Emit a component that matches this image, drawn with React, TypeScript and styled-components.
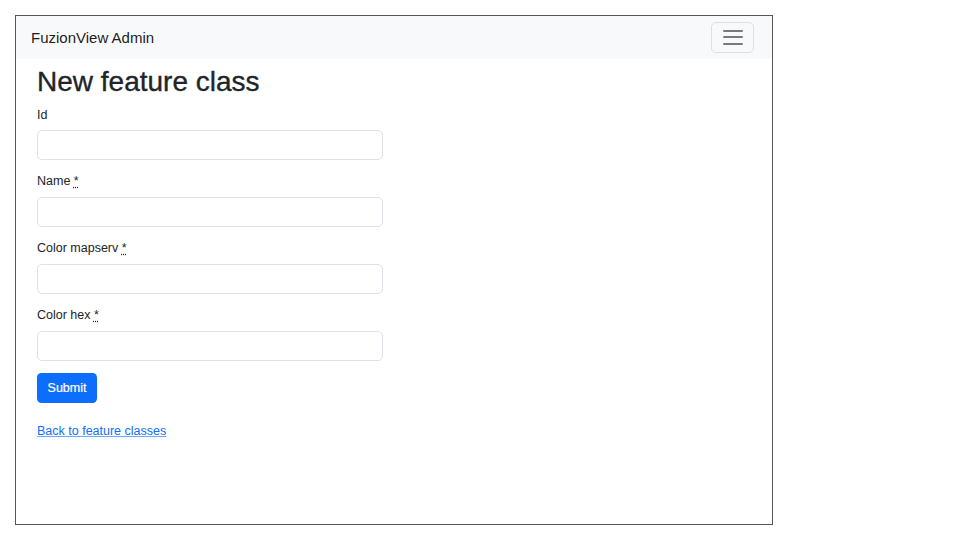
import { createGlobalStyle } from "styled-components";
import styled from "styled-components";

const GlobalStyle = createGlobalStyle`
  html, body {
    margin: 0;
    padding: 0;
    background: #fff;
  }
  body {
    font-family: "Liberation Sans", Arial, Helvetica, sans-serif;
    color: #212529;
    padding: 15px;
  }
  * { box-sizing: border-box; }
`;

const Frame = styled.div`
  width: 758px;
  height: 510px;
  border: 1px solid #555;
  background: #fff;
  overflow: hidden;
`;

const Navbar = styled.nav`
  height: 43px;
  background: #f8f9fa;
  display: flex;
  align-items: center;
  justify-content: space-between;
  padding: 0 18px 0 15px;
`;

const Brand = styled.a`
  font-size: 15px;
  color: rgba(0, 0, 0, 0.9);
  text-decoration: none;
`;

const Toggler = styled.button`
  width: 43px;
  height: 31px;
  margin-top: -1px;
  border: 1px solid rgba(0, 0, 0, 0.1);
  border-radius: 5px;
  background: transparent;
  display: flex;
  flex-direction: column;
  align-items: center;
  justify-content: center;
  gap: 4.5px;
  padding: 0;
`;

const TogglerBar = styled.span`
  display: block;
  width: 20px;
  height: 2px;
  border-radius: 1px;
  background: rgba(33, 37, 41, 0.6);
`;

const Main = styled.main`
  padding: 6px 21px 0;
`;

const Title = styled.h1`
  font-size: 28px;
  font-weight: 500;
  line-height: 1.2;
  margin: 0 0 7px;
  -webkit-text-stroke: 0.35px #212529;
`;

const Form = styled.form`
  width: 346px;
`;

const Field = styled.div`
  margin-bottom: 12px;
`;

const Label = styled.label`
  display: block;
  font-size: 12.5px;
  line-height: 18.75px;
  margin-bottom: 6px;
`;

const Required = styled.abbr`
  text-decoration: underline dotted;
  text-underline-offset: 2px;
  cursor: help;
`;

const Input = styled.input`
  display: block;
  width: 100%;
  height: 30px;
  border: 1px solid #dee2e6;
  border-radius: 5px;
  padding: 4px 9px;
  font: inherit;
  font-size: 12.5px;
  background: #fff;
  outline: none;
`;

const SubmitButton = styled.button`
  height: 30px;
  width: 60px;
  border: none;
  border-radius: 4.5px;
  background: #0d6efd;
  color: #fff;
  font-family: inherit;
  font-size: 12.5px;
  padding: 0;
  -webkit-text-stroke: 0.2px #fff;
`;

const BackLink = styled.a`
  display: inline-block;
  margin-top: 19px;
  font-size: 12.5px;
  line-height: 18.75px;
  color: #0d6efd;
  text-decoration: underline;
  text-decoration-color: rgba(13, 110, 253, 0.6);
`;

const fields = [
  { name: "id", label: "Id", required: false },
  { name: "name", label: "Name", required: true },
  { name: "color_mapserv", label: "Color mapserv", required: true },
  { name: "color_hex", label: "Color hex", required: true },
];

export default function App() {
  return (
    <>
      <GlobalStyle />
      <Frame>
        <Navbar>
          <Brand href="#">FuzionView Admin</Brand>
          <Toggler type="button" aria-label="Toggle navigation">
            <TogglerBar />
            <TogglerBar />
            <TogglerBar />
          </Toggler>
        </Navbar>
        <Main>
          <Title>New feature class</Title>
          <Form onSubmit={(e) => e.preventDefault()}>
            {fields.map((f) => (
              <Field key={f.name}>
                <Label htmlFor={f.name}>
                  {f.label}
                  {f.required ? (
                    <>
                      {" "}
                      <Required title="required">*</Required>
                    </>
                  ) : null}
                </Label>
                <Input id={f.name} name={f.name} type="text" />
              </Field>
            ))}
            <SubmitButton type="submit">Submit</SubmitButton>
          </Form>
          <BackLink href="#">Back to feature classes</BackLink>
        </Main>
      </Frame>
    </>
  );
}
